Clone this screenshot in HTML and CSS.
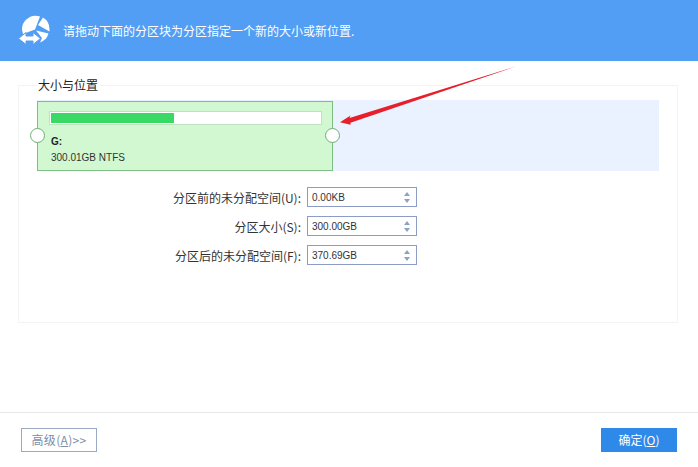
FILE: index.html
```html
<!DOCTYPE html>
<html lang="zh">
<head>
<meta charset="utf-8">
<title>调整分区</title>
<link rel="stylesheet" href="styles.css">
</head>
<body>
<div class="app">
  <header class="banner">
    <svg class="logo" width="34" height="34" viewBox="0 0 34 34">
      <path fill="#fff" d="M23 2.500A13.500 13.500 0 0 0 6 20L18 15.500Z"/>
      <path fill="#fff" d="M26 3.500A13.500 13.500 0 0 1 32.500 15V17.500L21 11Z"/>
      <path fill="#fff" d="M19 16.500L31.500 19.500A13.500 13.500 0 0 1 23 28.500L25 24Z"/>
      <path fill="#fff" stroke="#529ef4" stroke-width="1" d="M1.500 24.500L9 18.500V22H16V18.500L23.500 24.500 16 30.500V27H9V30.500Z"/>
    </svg>
    <p class="banner-text">请拖动下面的分区块为分区指定一个新的大小或新位置.</p>
  </header>

  <main class="content">
    <fieldset class="group">
      <legend class="group-title">大小与位置</legend>
      <div class="track">
        <div class="partition">
          <span class="handle handle-left"></span>
          <span class="handle handle-right"></span>
          <div class="usage"><div class="usage-fill"></div></div>
          <div class="drive">G:</div>
          <div class="size">300.01GB NTFS</div>
        </div>
      </div>
      <div class="form">
        <div class="row">
          <label class="label">分区前的未分配空间(U):</label>
          <div class="spin"><span class="value">0.00KB</span><span class="arrows"><i class="up"></i><i class="down"></i></span></div>
        </div>
        <div class="row">
          <label class="label">分区大小(S):</label>
          <div class="spin"><span class="value">300.00GB</span><span class="arrows"><i class="up"></i><i class="down"></i></span></div>
        </div>
        <div class="row">
          <label class="label">分区后的未分配空间(F):</label>
          <div class="spin"><span class="value">370.69GB</span><span class="arrows"><i class="up"></i><i class="down"></i></span></div>
        </div>
      </div>
    </fieldset>
  </main>

  <footer class="footer">
    <button class="btn btn-ghost" type="button">高级(<u>A</u>)&gt;&gt;</button>
    <button class="btn btn-primary" type="button">确定(<u>O</u>)</button>
  </footer>

  <svg class="annotation" width="698" height="467" viewBox="0 0 698 467">
    <path fill="#e61f2b" d="M515.500 66.500L349.500 118 350.500 115.500 340 122.300 350.500 124.800 350.500 122.800Z"/>
  </svg>
</div>
</body>
</html>
```
FILE: styles.css
```css
* { box-sizing: border-box; }
html, body { margin: 0; height: 100%; background: #fff; }
body { font-family: "Noto Sans CJK SC", "Liberation Sans", sans-serif; font-size: 12px; color: #333; overflow: hidden; }

.app { position: relative; width: 698px; height: 467px; display: flex; flex-direction: column; }

.banner { height: 61px; flex: none; background: #529ef4; display: flex; align-items: center; padding: 0 0 0 17px; gap: 12px; }
.logo { flex: none; margin-top: 1px; }
.banner-text { margin: 0; color: #fff; font-size: 12px; line-height: 16px; }

.content { flex: 1; padding: 16px 20px 0 18px; }
.group { margin: 0; padding: 0 18px 0 18px; height: 246px; border: 1px solid #f3f3f3; min-width: 0; }
.group-title { padding: 0 1px 0 1px; margin-left: 0; font-size: 12px; line-height: 16px; color: #222; }

.track { height: 71px; margin-top: 7px; background: #e9f2fe; padding-top: 1px; }
.partition { position: relative; width: 296px; height: 70px; background: #d2f8d2; border: 1px solid #7fbe82; padding: 9px 10px 0 11px; }
.handle { position: absolute; top: 26px; width: 15px; height: 15px; border-radius: 50%; background: #fff; border: 1px solid #6fae72; }
.handle-left { left: -8px; }
.handle-right { right: -8px; }
.usage { height: 14px; background: #fff; border: 1px solid #bfe3c0; padding: 1px; }
.usage-fill { width: 123px; height: 10px; background: #39d966; }
.drive { margin-top: 10px; margin-left: 2px; font-size: 10px; line-height: 14px; font-weight: 700; color: #222; font-family: "Liberation Sans", sans-serif; }
.size { margin-top: 2px; margin-left: 2px; font-size: 10px; line-height: 14px; color: #333; font-family: "Liberation Sans", sans-serif; }

.form { display: flex; flex-direction: column; gap: 9px; margin-top: 16px; }
.row { display: flex; align-items: center; height: 20px; }
.label { width: 270px; text-align: right; padding-right: 6px; font-size: 12px; color: #333; white-space: nowrap; }
.spin { width: 110px; height: 20px; border: 1px solid #8c9cc4; display: flex; align-items: center; justify-content: space-between; padding: 0 6px 0 4px; background: #fff; }
.value { font-size: 10px; color: #333; font-family: "Liberation Sans", sans-serif; }
.arrows { display: flex; flex-direction: column; gap: 3px; }
.up, .down { display: block; width: 0; height: 0; border-left: 3.500px solid transparent; border-right: 3.500px solid transparent; }
.up { border-bottom: 4px solid #8ba3c0; }
.down { border-top: 4px solid #8ba3c0; }

.footer { height: 55px; flex: none; border-top: 1px solid #e8e8e8; display: flex; align-items: flex-start; justify-content: space-between; padding: 15px 21px 0 21px; }
.btn { width: 76px; height: 24px; padding: 0; font-family: inherit; font-size: 12px; line-height: 16px; }
.btn u { text-underline-offset: 1px; }
.btn-ghost { background: #fff; border: 1px solid #9aa9c4; color: #7c8ea8; letter-spacing: .3px; }
.btn-primary { background: #2f89e8; border: 0; color: #fff; }

.annotation { position: absolute; left: 0; top: 0; pointer-events: none; }
```
